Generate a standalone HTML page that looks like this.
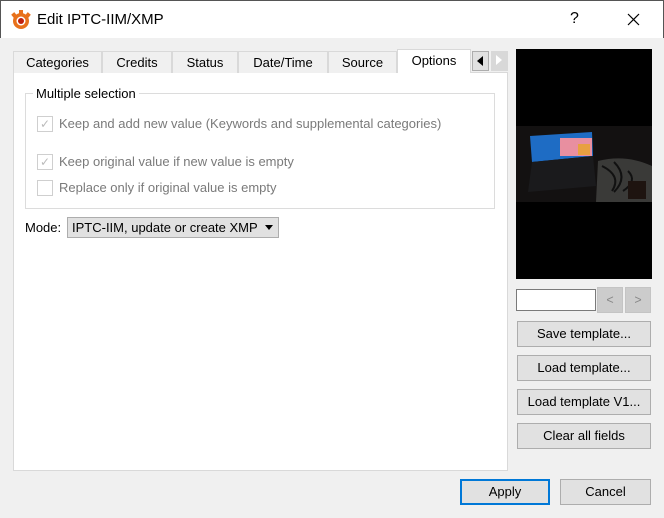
<!DOCTYPE html>
<html><head><style>
*{box-sizing:border-box;margin:0;padding:0}
body{width:664px;height:518px;background:#f0f0f0;font-family:"Liberation Sans",sans-serif;font-size:12.5px;color:#000;position:relative;overflow:hidden}
.a{position:absolute}
.title{left:0;top:0;width:664px;height:38px;background:#fff;border:1px solid #555;border-bottom:none}
.tab{top:51px;height:22px;border:1px solid #d9d9d9;border-bottom:none;background:#f0f0f0;text-align:center;line-height:21px;font-size:13px}
.btn{background:#e1e1e1;border:1px solid #adadad;text-align:center;font-size:13px;line-height:24px}
.cb{width:16px;height:16px;border:1px solid #cfcfcf;background:#fff;color:#bbb;font-size:12px;line-height:14px;text-align:center}
.g{color:#7a7a7a;font-size:13px}
</style></head><body>
<div class="a title">
 <svg class="a" style="left:9px;top:8px" width="22" height="22" viewBox="0 0 22 22"><g fill="#e8711b"><circle cx="11" cy="12" r="8"/><rect x="9" y="1" width="4" height="5"/><rect x="2" y="4" width="4" height="4" transform="rotate(-40 4 6)"/><rect x="16" y="4" width="4" height="4" transform="rotate(40 18 6)"/></g><circle cx="11" cy="12" r="4.5" fill="#fff"/><circle cx="11" cy="12" r="3" fill="#c0200c"/></svg>
 <div class="a" style="left:36px;top:10px;font-size:15px">Edit IPTC-IIM/XMP</div>
 <div class="a" style="left:569px;top:9px;font-size:16px">?</div>
 <svg class="a" style="left:626px;top:12px" width="13" height="13"><path d="M1 1L12 12M12 1L1 12" stroke="#000" stroke-width="1.2"/></svg>
</div>
<div class="a" style="left:13px;top:72px;width:495px;height:399px;background:#fff;border:1px solid #d9d9d9"></div>
<div class="a tab" style="left:13px;width:89px">Categories</div>
<div class="a tab" style="left:102px;width:70px">Credits</div>
<div class="a tab" style="left:172px;width:66px">Status</div>
<div class="a tab" style="left:238px;width:90px">Date/Time</div>
<div class="a tab" style="left:328px;width:69px">Source</div>
<div class="a tab" style="left:397px;top:49px;height:24px;width:74px;background:#fff">Options</div>
<div class="a" style="left:472px;top:51px;width:17px;height:20px;border:1px solid #adadad;background:#e1e1e1"><svg width="15" height="18"><path d="M10 4L4 9L10 14Z"/></svg></div>
<div class="a" style="left:491px;top:51px;width:17px;height:20px;background:#d8d8d8"><svg width="15" height="18"><path d="M5 4L11 9L5 14Z" fill="#fff"/></svg></div>
<div class="a" style="left:25px;top:93px;width:470px;height:116px;border:1px solid #dcdcdc"></div>
<div class="a" style="left:33px;top:86px;background:#fff;padding:0 3px;font-size:13px">Multiple selection</div>
<div class="a cb" style="left:37px;top:116px">✓</div><div class="a g" style="left:59px;top:116px">Keep and add new value (Keywords and supplemental categories)</div>
<div class="a cb" style="left:37px;top:154px">✓</div><div class="a g" style="left:59px;top:154px">Keep original value if new value is empty</div>
<div class="a cb" style="left:37px;top:180px"></div><div class="a g" style="left:59px;top:180px">Replace only if original value is empty</div>
<div class="a" style="left:25px;top:220px;font-size:13px">Mode:</div>
<div class="a" style="left:67px;top:217px;width:212px;height:21px;background:#e1e1e1;border:1px solid #adadad;font-size:13px;line-height:19px;padding-left:4px">IPTC-IIM, update or create XMP<svg class="a" style="left:197px;top:7px" width="9" height="6"><path d="M0 0H8L4 5Z"/></svg></div>
<div class="a" style="left:516px;top:49px;width:136px;height:230px;background:#000"></div>
<svg class="a" style="left:516px;top:126px" width="136" height="76"><rect width="136" height="76" fill="#131111"/><path d="M14 10L76 6L77 30L16 36Z" fill="#1e6cc4"/><rect x="44" y="12" width="32" height="18" fill="#e88fa0"/><rect x="62" y="18" width="12" height="11" fill="#e8a040"/><path d="M16 36L77 30L80 60L12 66Z" fill="#1a1a1c"/><path d="M82 35Q110 28 136 40V76H80Z" fill="#3a3a38"/><path d="M86 40q20 10 10 25M98 36q15 15 0 30M112 45q10 10 -5 20" stroke="#111" fill="none" stroke-width="2"/><rect x="112" y="55" width="18" height="18" fill="#1e1410"/></svg>
<div class="a" style="left:516px;top:289px;width:80px;height:22px;background:#fff;border:1px solid #7a7a7a"></div>
<div class="a" style="left:597px;top:287px;width:26px;height:26px;background:#ccc;border:1px solid #c4c4c4;color:#888;text-align:center;line-height:24px">&lt;</div>
<div class="a" style="left:625px;top:287px;width:26px;height:26px;background:#ccc;border:1px solid #c4c4c4;color:#888;text-align:center;line-height:24px">&gt;</div>
<div class="a btn" style="left:517px;top:321px;width:134px;height:26px">Save template...</div>
<div class="a btn" style="left:517px;top:355px;width:134px;height:26px">Load template...</div>
<div class="a btn" style="left:517px;top:389px;width:134px;height:26px">Load template V1...</div>
<div class="a btn" style="left:517px;top:423px;width:134px;height:26px">Clear all fields</div>
<div class="a btn" style="left:460px;top:479px;width:90px;height:26px;border:2px solid #0078d7;line-height:22px">Apply</div>
<div class="a btn" style="left:560px;top:479px;width:91px;height:26px">Cancel</div>
</body></html>
